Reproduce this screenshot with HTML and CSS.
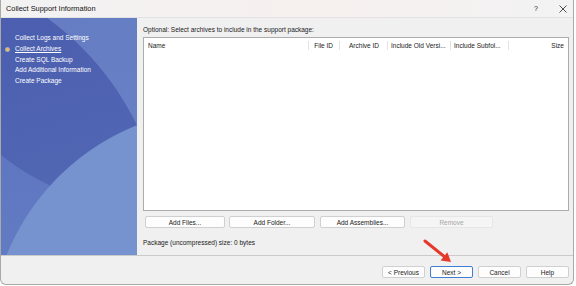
FILE: index.html
```html
<!DOCTYPE html>
<html lang="en">
<head>
  <meta charset="UTF-8">
  <title>Collect Support Information</title>
  <link rel="stylesheet" href="styles.css">
</head>
<body>
  <div class="window">
    <!-- Titlebar -->
    <div class="titlebar">
      <span class="title">Collect Support Information</span>
      <span class="tb-help">?</span>
      <span class="tb-close">
        <svg width="8" height="8" viewBox="0 0 8 8"><path d="M0.5 0.5 L7.5 7.5 M7.5 0.5 L0.5 7.5" stroke="#222" stroke-width="0.8" fill="none"/></svg>
      </span>
    </div>

    <div class="content">
      <!-- Wizard steps -->
      <div class="sidebar">
        <ul class="steps">
          <li>Collect Logs and Settings</li>
          <li class="current">Collect Archives</li>
          <li>Create SQL Backup</li>
          <li>Add Additional Information</li>
          <li>Create Package</li>
        </ul>
      </div>

      <div class="main">
        <p class="hint">Optional: Select archives to include in the support package:</p>
        <div class="listbox">
          <div class="list-head">
            <div class="col col-name">Name</div>
            <div class="col col-fileid">File ID</div>
            <div class="col col-archid">Archive ID</div>
            <div class="col col-old">Include Old Versi...</div>
            <div class="col col-sub">Include Subfol...</div>
            <div class="col col-size">Size</div>
          </div>
        </div>
        <div class="actions">
          <button class="btn btn-files">Add Files...</button>
          <button class="btn btn-folder">Add Folder...</button>
          <button class="btn btn-asm">Add Assemblies...</button>
          <button class="btn btn-remove" disabled>Remove</button>
        </div>
        <p class="size-info">Package (uncompressed) size: 0 bytes</p>
      </div>
    </div>

    <!-- Wizard buttons -->
    <div class="footer">
      <button class="btn btn-nav">&lt; Previous</button>
      <button class="btn btn-nav btn-default">Next &gt;</button>
      <button class="btn btn-nav">Cancel</button>
      <button class="btn btn-nav">Help</button>
    </div>
  </div>

  <!-- callout arrow -->
  <svg class="callout" width="45" height="35" viewBox="0 0 45 35">
    <path d="M10 8 L30.5 24.5" stroke="#e4392b" stroke-width="3" stroke-linecap="round" fill="none"/>
    <polygon points="36,29 25.6,27.4 32.3,19.2" fill="#e4392b"/>
  </svg>
</body>
</html>
```

FILE: styles.css
```css
body {
  margin: 0;
  background-color: #ffffff;
  font-family: "Liberation Sans", Arial, sans-serif;
  font-size: 6.5px;
  color: #1a1a1a;
  position: relative;
  width: 576px;
  height: 286px;
}
p {
  margin: 0;
}
.window {
  width: 574px;
  height: 285px;
  box-sizing: border-box;
  border: 1px solid #a9a9a9;
  border-top: none;
  border-radius: 0 0 6px 6px;
  overflow: hidden;
  background-color: #f0f0f0;
  display: flex;
  flex-direction: column;
}
.titlebar {
  height: 17px;
  flex: 0 0 17px;
  border-bottom: 1px solid #e2e2e2;
  background: linear-gradient(90deg, #f2f2f3 0%, #f6f0ee 55%, #f3f3f4 100%);
  display: flex;
  align-items: center;
}
.title {
  font-size: 7.4px;
  margin-left: 5px;
  color: #111111;
  flex: 1;
}
.tb-help {
  font-size: 7px;
  width: 10px;
  text-align: center;
  margin-right: 18px;
}
.tb-close {
  width: 8px;
  height: 8px;
  margin-right: 6px;
  display: flex;
}
.content {
  flex: 1;
  display: flex;
}
.sidebar {
  width: 136px;
  flex: 0 0 136px;
  background:
    radial-gradient(circle 235px at 223px 325px, #7693cf 234px, transparent 235px),
    radial-gradient(circle 287px at -122px 232px, transparent 286px, rgba(140, 170, 225, 0.4) 287px),
    radial-gradient(circle 238px at 149px -48px, transparent 237px, rgba(130, 160, 225, 0.3) 238px),
    linear-gradient(165deg, #4b5eaf 0%, #5066b3 60%, #566fb8 100%);
}
.steps {
  list-style: none;
  margin: 0;
  padding: 15px 0 0 0;
}
.steps li {
  position: relative;
  padding-left: 14px;
  line-height: 10.75px;
  color: #ffffff;
}
.steps li.current {
  text-decoration: underline;
}
.steps li.current::before {
  content: "";
  position: absolute;
  left: 5px;
  top: 4px;
  width: 3px;
  height: 3px;
  border-radius: 50%;
  background-color: #f3c24a;
  box-shadow: 0 0 0 1px rgba(255, 240, 200, 0.5);
}
.main {
  flex: 1;
  padding: 7px 4px 0 6px;
  display: flex;
  flex-direction: column;
}
.hint {
  line-height: 10px;
  margin-bottom: 2px;
}
.listbox {
  height: 174px;
  box-sizing: border-box;
  border: 1px solid #acacac;
  background-color: #ffffff;
}
.list-head {
  display: flex;
  padding-top: 3px;
}
.col {
  box-sizing: border-box;
  line-height: 9px;
  border-right: 1px solid #e3e3e3;
  white-space: nowrap;
  overflow: hidden;
}
.col-name {
  width: 165px;
  padding-left: 4px;
}
.col-fileid {
  width: 31px;
  text-align: right;
  padding-right: 6px;
}
.col-archid {
  width: 48px;
  text-align: right;
  padding-right: 8px;
}
.col-old {
  width: 63px;
  padding-left: 3px;
}
.col-sub {
  width: 58px;
  padding-left: 3px;
}
.col-size {
  flex: 1;
  border-right: none;
  text-align: right;
  padding-right: 4px;
}
.actions {
  display: flex;
  margin-top: 5px;
  padding-left: 2px;
}
.btn {
  height: 12px;
  box-sizing: border-box;
  padding: 0;
  font-family: "Liberation Sans", Arial, sans-serif;
  font-size: 6.5px;
  color: #1a1a1a;
  background-color: #fdfdfd;
  border: 1px solid #d0d0d0;
  border-radius: 2px;
}
.btn-files {
  width: 80px;
}
.btn-folder {
  width: 86px;
  margin-left: 4px;
}
.btn-asm {
  width: 85px;
  margin-left: 5px;
}
.btn-remove {
  width: 83px;
  margin-left: 5px;
  color: #a6a6a6;
  background-color: #f5f5f5;
  border-color: #e6e6e6;
}
.size-info {
  margin-top: 10px;
  line-height: 10px;
}
.footer {
  flex: 0 0 auto;
  height: 18px;
  border-top: 1px solid #cacaca;
  display: flex;
  justify-content: flex-end;
  gap: 5px;
  padding: 10px 4px 0 0;
}
.btn-nav {
  width: 43px;
}
.btn-default {
  border-color: #3f7fd1;
}
.callout {
  position: absolute;
  left: 415px;
  top: 233px;
}
```
